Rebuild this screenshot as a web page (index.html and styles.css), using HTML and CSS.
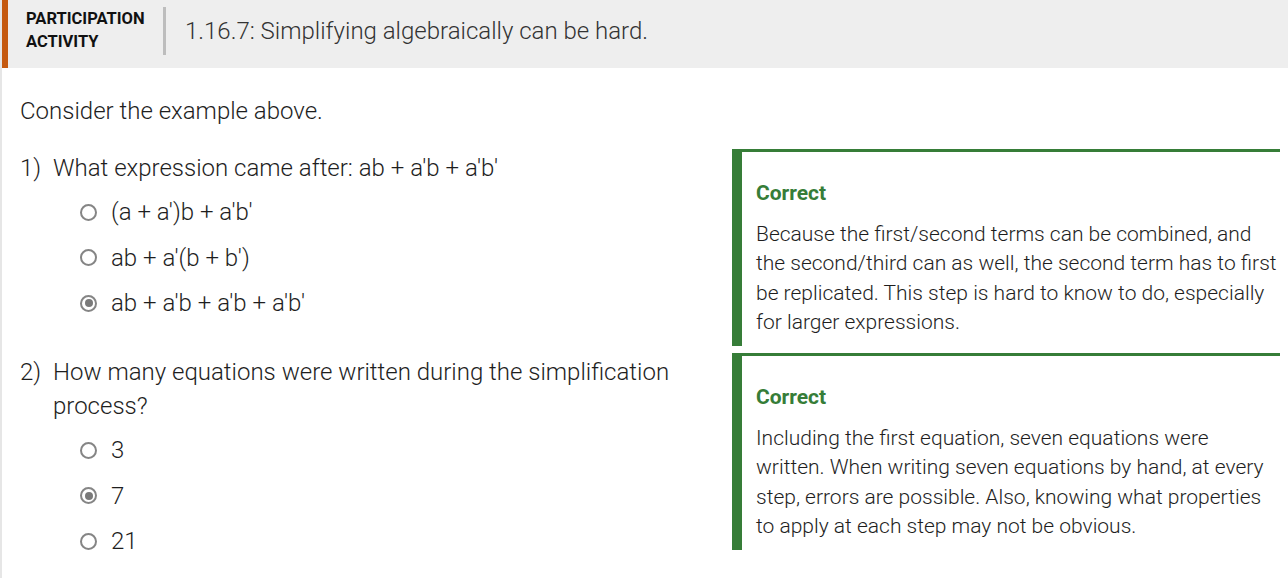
FILE: index.html
```html
<!DOCTYPE html>
<html>
<head>
<meta charset="utf-8">
<link rel="stylesheet" href="styles.css">
</head>
<body>
<div class="activity">
  <div class="header">
    <div class="label">PARTICIPATION<br>ACTIVITY</div>
    <div class="divider"></div>
    <div class="title">1.16.7: Simplifying algebraically can be hard.</div>
  </div>
  <div class="content">
    <p class="intro">Consider the example above.</p>

    <div class="question">
      <div class="q-left">
        <div class="q-text"><span class="num">1)</span><span class="prompt">What expression came after: ab + a'b + a'b'</span></div>
        <div class="options">
          <div class="option"><span class="radio"></span><span>(a + a')b + a'b'</span></div>
          <div class="option"><span class="radio"></span><span>ab + a'(b + b')</span></div>
          <div class="option"><span class="radio checked"></span><span>ab + a'b + a'b + a'b'</span></div>
        </div>
      </div>
      <div class="feedback">
        <div class="fb-title">Correct</div>
        <div class="fb-text">Because the first/second terms can be combined, and the second/third can as well, the second term has to first be replicated. This step is hard to know to do, especially for larger expressions.</div>
      </div>
    </div>

    <div class="question">
      <div class="q-left">
        <div class="q-text"><span class="num">2)</span><span class="prompt">How many equations were written during the simplification process?</span></div>
        <div class="options">
          <div class="option"><span class="radio"></span><span>3</span></div>
          <div class="option"><span class="radio checked"></span><span>7</span></div>
          <div class="option"><span class="radio"></span><span>21</span></div>
        </div>
      </div>
      <div class="feedback">
        <div class="fb-title">Correct</div>
        <div class="fb-text">Including the first equation, seven equations were written. When writing seven equations by hand, at every step, errors are possible. Also, knowing what properties to apply at each step may not be obvious.</div>
      </div>
    </div>
  </div>
</div>
</body>
</html>
```
FILE: styles.css
```css
html, body {
  margin: 0;
  padding: 0;
  background: #ffffff;
}
body {
  font-family: Roboto, "Liberation Sans", sans-serif;
  color: #222;
}
.activity {
  border-left: 2px solid #e6e6e6;
  min-height: 578px;
  box-sizing: border-box;
}
.header {
  display: flex;
  align-items: flex-start;
  background: #eeeeee;
  height: 68px;
  border-left: 6px solid #c55a11;
  box-sizing: border-box;
}
.label {
  font-weight: 700;
  font-size: 16.5px;
  line-height: 23px;
  color: #111;
  padding: 7px 0 0 18px;
  width: 137px;
}
.divider {
  width: 3px;
  height: 48px;
  background: #bdbdbd;
  margin-top: 7px;
}
.title {
  font-size: 24px;
  font-weight: 300;
  color: #333;
  padding: 14px 0 0 19px;
  line-height: 34px;
}
.content {
  padding: 0 8px 0 18px;
}
.intro {
  margin: 0;
  padding: 28px 0 23px;
  font-size: 24px;
  font-weight: 300;
  line-height: 30px;
  color: #1e1e1e;
}
.question {
  display: flex;
  gap: 20px;
  margin-bottom: 7px;
}
.q-left {
  flex: 1;
  padding-top: 2px;
}
.q-text {
  display: flex;
  font-size: 24px;
  font-weight: 300;
  line-height: 34px;
  color: #1e1e1e;
}
.num {
  width: 33px;
  flex: none;
}
.prompt {
  flex: 1;
}
.options {
  display: flex;
  flex-direction: column;
  gap: 11.5px;
  padding: 10px 0 0 60px;
}
.option {
  display: flex;
  align-items: center;
  gap: 14px;
  font-size: 24px;
  font-weight: 300;
  line-height: 34px;
  color: #1e1e1e;
}
.radio {
  width: 17px;
  height: 17px;
  border: 2px solid #858585;
  border-radius: 50%;
  box-sizing: border-box;
  background: #fff;
  position: relative;
  flex: none;
}
.radio.checked::after {
  content: "";
  position: absolute;
  left: 2.5px;
  top: 2.5px;
  width: 8px;
  height: 8px;
  border-radius: 50%;
  background: #7a7a7a;
}
.feedback {
  width: 548px;
  flex: none;
  height: 197px;
  box-sizing: border-box;
  border-top: 3px solid #367d38;
  border-left: 10px solid #367d38;
  padding: 27px 0 0 14px;
}
.fb-title {
  font-size: 21px;
  font-weight: 700;
  color: #367d38;
  line-height: 29px;
  margin-bottom: 12px;
}
.fb-text {
  font-size: 21px;
  font-weight: 300;
  line-height: 29.3px;
  color: #1e1e1e;
}
```
